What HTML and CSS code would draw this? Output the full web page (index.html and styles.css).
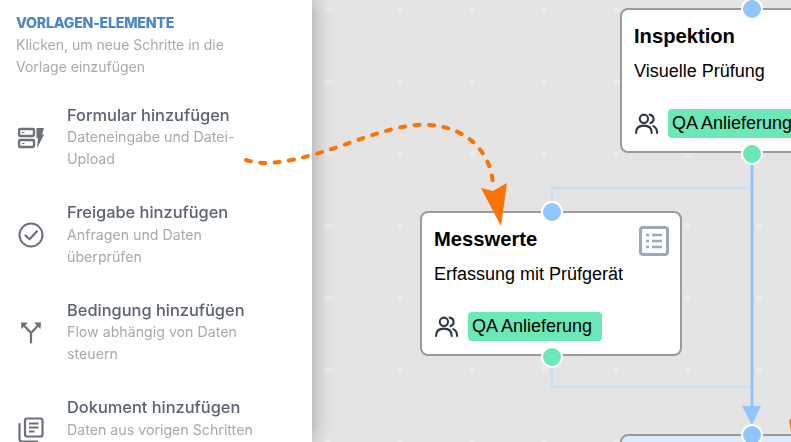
FILE: index.html
```html
<!DOCTYPE html>
<html lang="de">
<head>
    <meta charset="UTF-8">
    <title>Vorlagen-Elemente</title>
    <link rel="stylesheet" href="styles.css">
</head>
<body>
    <aside class="sidebar">
        <h2 class="sidebar-title">VORLAGEN-ELEMENTE</h2>
        <p class="sidebar-hint">Klicken, um neue Schritte in die Vorlage einzufügen</p>

        <div class="item">
            <svg class="item-icon" viewBox="0 0 26 26">
                <rect x="1" y="4" width="15" height="7" rx="1.200" fill="none" stroke="currentColor" stroke-width="2.400"/>
                <rect x="1" y="15" width="15" height="7" rx="1.200" fill="none" stroke="currentColor" stroke-width="2.400"/>
                <path d="M4 7.500h2.500M4 18.500h2.500" stroke="currentColor" stroke-width="1.200"/>
                <path d="M18.500 3h7.500l-2 6.500h2l-7 14 1-10.500h-1.500z" fill="currentColor"/>
            </svg>
            <div>
                <div class="item-title">Formular hinzufügen</div>
                <div class="item-desc">Dateneingabe und Datei-<br>Upload</div>
            </div>
        </div>

        <div class="item">
            <svg class="item-icon" viewBox="0 0 26 26">
                <circle cx="13" cy="13" r="11.500" fill="none" stroke="currentColor" stroke-width="2"/>
                <path d="M7.500 13.500l4 3.800 7.500-8" fill="none" stroke="currentColor" stroke-width="2.200" stroke-linecap="round" stroke-linejoin="round"/>
            </svg>
            <div>
                <div class="item-title">Freigabe hinzufügen</div>
                <div class="item-desc">Anfragen und Daten<br>überprüfen</div>
            </div>
        </div>

        <div class="item">
            <svg class="item-icon" viewBox="0 0 26 26">
                <path d="M13 22.500V13L6 5.500M13 13l7-7.500" fill="none" stroke="currentColor" stroke-width="2.200" stroke-linecap="round"/>
                <path d="M3 2.500h7L3.500 9zM23 2.500h-7L22.500 9z" fill="currentColor"/>
            </svg>
            <div>
                <div class="item-title">Bedingung hinzufügen</div>
                <div class="item-desc">Flow abhängig von Daten<br>steuern</div>
            </div>
        </div>

        <div class="item">
            <svg class="item-icon" viewBox="0 0 26 26">
                <rect x="7" y="1.500" width="17.500" height="18" rx="2" fill="none" stroke="currentColor" stroke-width="2.200"/>
                <path d="M1.500 7v15a2.500 2.500 0 0 0 2.500 2.500h15" fill="none" stroke="currentColor" stroke-width="2.200" stroke-linecap="round"/>
                <path d="M11 6.500h9.500M11 10.500h9.500M11 14.500h5.500" stroke="currentColor" stroke-width="2"/>
            </svg>
            <div>
                <div class="item-title">Dokument hinzufügen</div>
                <div class="item-desc">Daten aus vorigen Schritten</div>
            </div>
        </div>
    </aside>

    <main class="canvas">
        <svg class="edges" viewBox="312 0 479 442">
            <defs>
                <pattern id="grid-dots" x="37" y="7" width="72" height="72" patternUnits="userSpaceOnUse">
                    <rect width="6" height="6" rx="1" fill="#ebebeb"/>
                </pattern>
            </defs>
            <rect x="312" y="0" width="479" height="442" fill="url(#grid-dots)"/>
            <path d="M552 200V188H750M552 368V387H750" fill="none" stroke="#cfdfef" stroke-width="3"/>
            <path d="M752 160V410" fill="none" stroke="#93c5fd" stroke-width="3"/>
            <path d="M742 406H761L752 425z" fill="#93c5fd"/>
        </svg>

        <div class="node node-inspektion">
            <span class="handle handle-top"></span>
            <h3 class="node-title">Inspektion</h3>
            <p class="node-desc">Visuelle Prüfung</p>
            <div class="node-team">
                <svg class="team-icon" viewBox="0 0 24 24">
                    <circle cx="9.500" cy="7.500" r="4" fill="none" stroke="currentColor" stroke-width="2"/>
                    <path d="M2 21c0-4.500 3-7 7.500-7s7.500 2.500 7.500 7M15 3.500c2.500.5 3.800 2.300 3.800 4.200 0 1.800-1 3.300-3 4M18.500 14.500c2.300 1 3.700 3.300 3.700 6.500" fill="none" stroke="currentColor" stroke-width="2" stroke-linecap="round"/>
                </svg>
                <span class="badge">QA Anlieferung</span>
            </div>
            <span class="handle handle-bottom"></span>
        </div>

        <div class="node node-messwerte">
            <span class="handle handle-top"></span>
            <h3 class="node-title">Messwerte</h3>
            <p class="node-desc">Erfassung mit Prüfgerät</p>
            <svg class="node-icon" viewBox="0 0 30 30">
                <rect x="1.500" y="1.500" width="27" height="27" rx="2.500" fill="none" stroke="currentColor" stroke-width="3"/>
                <path d="M7 9h3M13 9h10M7 15h3M13 15h10M7 21h3M13 21h10" stroke="currentColor" stroke-width="2.500"/>
            </svg>
            <div class="node-team">
                <svg class="team-icon" viewBox="0 0 24 24">
                    <circle cx="9.500" cy="7.500" r="4" fill="none" stroke="currentColor" stroke-width="2"/>
                    <path d="M2 21c0-4.500 3-7 7.500-7s7.500 2.500 7.500 7M15 3.500c2.500.5 3.800 2.300 3.800 4.200 0 1.800-1 3.300-3 4M18.500 14.500c2.300 1 3.700 3.300 3.700 6.500" fill="none" stroke="currentColor" stroke-width="2" stroke-linecap="round"/>
                </svg>
                <span class="badge">QA Anlieferung</span>
            </div>
            <span class="handle handle-bottom"></span>
        </div>

        <div class="node node-next">
            <span class="handle handle-top"></span>
        </div>
    </main>

    <svg class="callout" viewBox="0 0 791 442">
        <path d="M246 160C266 166 286 162 312 155C350 145 395 122 430 125C470 128 492 155 493 186" fill="none" stroke="#f97306" stroke-width="4" stroke-linecap="round" stroke-dasharray="5 9.500"/>
        <path d="M481 188L493 191L507 183L501 226z" fill="#f97306"/>
        <path d="M789 420L791 419V431z" fill="#f97306"/>
    </svg>
</body>
</html>
```
FILE: styles.css
```css
html, body {
    height: 100%;
    margin: 0;
    overflow: hidden;
}

body {
    display: flex;
    position: relative;
    font-family: "Liberation Sans", Arial, sans-serif;
    background: #e4e4e4;
}

.sidebar {
    width: 312px;
    height: 442px;
    overflow: hidden;
    flex-shrink: 0;
    box-sizing: border-box;
    padding: 12px 16px 0;
    background: #ffffff;
    font-family: Inter, sans-serif;
    position: relative;
    z-index: 1;
    filter: blur(0.35px);
    box-shadow: 0 0 20px rgba(0, 0, 0, 0.32);
}

.sidebar-title {
    margin: 0;
    font-size: 14.2px;
    line-height: 22px;
    font-weight: 800;
    letter-spacing: -0.25px;
    color: #4a86c8;
}

.sidebar-hint {
    margin: 0 0 26.5px;
    width: 240px;
    font-size: 14px;
    line-height: 22px;
    color: #a6a9af;
}

.item {
    display: flex;
    align-items: flex-start;
    gap: 23px;
    height: 66px;
    margin-bottom: 31.5px;
    padding-left: 2px;
}

.item-icon {
    width: 26px;
    height: 26px;
    flex-shrink: 0;
    color: #6b7079;
    margin-top: 20px;
}

.item-title {
    font-size: 16.4px;
    line-height: 21px;
    margin-bottom: 0.5px;
    font-weight: 500;
    color: #5b6270;
}

.item-desc {
    font-size: 14.2px;
    line-height: 22px;
    color: #a6a9af;
    white-space: nowrap;
}

.canvas {
    flex: 1;
    position: relative;
}

.edges {
    position: absolute;
    inset: 0;
    width: 479px;
    height: 442px;
}

.node {
    position: absolute;
    width: 262px;
    height: 145px;
    box-sizing: border-box;
    padding: 14px 12px 0;
    background: #ffffff;
    border: 2px solid #9b9b9b;
    border-radius: 8px;
    color: #000000;
}

.node-inspektion {
    left: 308px;
    top: 8px;
}

.node-messwerte {
    left: 108px;
    top: 211px;
}

.node-next {
    left: 308px;
    top: 434px;
    background: #dbe9fc;
}

.node-title {
    margin: 0;
    font-size: 20.2px;
    line-height: 24px;
    font-weight: 700;
}

.node-desc {
    margin: 12px 0 0;
    font-size: 18px;
    line-height: 22px;
}

.node-team {
    display: flex;
    align-items: center;
    gap: 9px;
    margin-top: 27px;
}

.team-icon {
    width: 25px;
    height: 25px;
    color: #2b3648;
}

.badge {
    padding: 0 10px 0 4px;
    height: 29px;
    line-height: 29px;
    font-size: 18px;
    white-space: nowrap;
    background: #6ce8b6;
    border-radius: 4px;
}

.node-icon {
    position: absolute;
    right: 11px;
    top: 13px;
    width: 30px;
    height: 30px;
    color: #9aa8c2;
}

.handle {
    position: absolute;
    left: 119px;
    width: 18px;
    height: 18px;
    background: #93c5fd;
    border: 2px solid #ffffff;
    border-radius: 50%;
}

.handle-top {
    top: -12px;
}

.handle-bottom {
    bottom: -14px;
    background: #6ce8b6;
}

.callout {
    position: absolute;
    left: 0;
    top: 0;
    width: 791px;
    height: 442px;
    z-index: 2;
    pointer-events: none;
}
```
